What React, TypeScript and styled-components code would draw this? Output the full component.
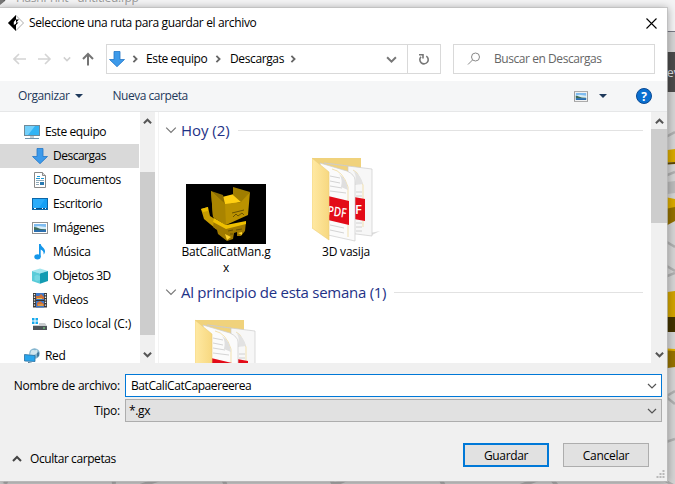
import React from "react";
import styled, { createGlobalStyle } from "styled-components";

const GlobalStyle = createGlobalStyle`
  * { box-sizing: border-box; }
  body { margin: 0; overflow: hidden; background: #d2d2d2; }
  svg { display: block; flex: none; }
`;

const Screen = styled.div`
  position: relative;
  width: 675px;
  height: 484px;
  overflow: hidden;
  padding-top: 8px;
  background: #d2d2d2;
  font-family: "Open Sans", "Noto Sans", sans-serif;
  font-size: 12px;
  color: #000;
`;

const Backdrop = styled.div`
  position: absolute;
  inset: 0;
`;

const BackTitle = styled.div`
  position: absolute;
  left: 16px;
  top: -10px;
  line-height: 16px;
  color: #9a9a9a;
  letter-spacing: -0.35px;
  white-space: nowrap;
`;

const BackTab = styled.div`
  position: absolute;
  left: 660px;
  top: 52px;
  width: 15px;
  height: 40px;
  padding-left: 2px;
  line-height: 42px;
  font-size: 12px;
  color: #d8dde4;
  background: #4b4b4b;
  white-space: nowrap;
  overflow: hidden;
`;

const Dialog = styled.div`
  position: relative;
  display: flex;
  flex-direction: column;
  width: 667px;
  height: 473px;
  background: #fff;
  box-shadow: 0 0 0 1px rgba(190, 190, 190, 0.75), 0 1px 8px 1px rgba(0, 0, 0, 0.32);
`;

const Text = styled.span<{ $ls?: number }>`
  white-space: nowrap;
  line-height: 16px;
  letter-spacing: ${(p) => p.$ls ?? -0.38}px;
`;

const TitleBar = styled.header`
  display: flex;
  align-items: center;
  height: 30px;
  padding: 0 10px 0 8px;
  gap: 5px;
`;

const Spacer = styled.div`
  flex: 1;
`;

const NavRow = styled.div`
  display: flex;
  align-items: center;
  height: 43px;
  padding: 0 12px 1px 13px;
`;

const Arrows = styled.div`
  display: flex;
  align-items: center;
  width: 93px;
`;

const AddressBar = styled.div`
  display: flex;
  align-items: center;
  width: 335px;
  height: 30px;
  border: 1px solid #d9d9d9;
  padding-left: 2px;
`;

const Crumb = styled.div<{ $w: number; $pad?: number }>`
  display: flex;
  flex: none;
  align-items: center;
  width: ${(p) => p.$w}px;
  padding-left: ${(p) => p.$pad ?? 7}px;
`;

const Refresh = styled.div`
  display: flex;
  align-items: center;
  justify-content: center;
  width: 33px;
  height: 28px;
  border-left: 1px solid #d9d9d9;
`;

const SearchBox = styled.div`
  display: flex;
  align-items: center;
  width: 202px;
  height: 30px;
  margin-left: 12px;
  padding-left: 13px;
  gap: 13px;
  border: 1px solid #d9d9d9;
  color: #666;
`;

const Toolbar = styled.div`
  display: flex;
  align-items: center;
  height: 31px;
  padding: 0 15px 0 18px;
  background: #f5f6f7;
  border-bottom: 1px solid #e6e7e8;
  color: #1e395b;
`;

const Body = styled.main`
  display: flex;
  height: 251px;
`;

const Sidebar = styled.nav`
  width: 140px;
  padding-top: 8px;
  overflow: hidden;
`;

const TreeRow = styled.div<{ $root?: boolean; $on?: boolean; $gap?: number }>`
  display: flex;
  align-items: center;
  width: 139px;
  height: 24px;
  margin-top: ${(p) => p.$gap ?? 0}px;
  padding-left: ${(p) => (p.$root ? 24 : 32)}px;
  gap: 5px;
  background: ${(p) => (p.$on ? "#d9d9d9" : "transparent")};
`;

const ScrollTrack = styled.div<{ $w: number }>`
  display: flex;
  flex-direction: column;
  align-items: center;
  width: ${(p) => p.$w}px;
  height: 251px;
  padding: 5px 0 4px;
  background: #f0f0f0;
`;

const Thumb = styled.div<{ $before: number; $h: number }>`
  width: 100%;
  height: ${(p) => p.$h}px;
  margin-top: ${(p) => p.$before}px;
  background: #cdcdcd;
`;

const Divider = styled.div`
  width: 4px;
  border-right: 1px solid #f3f3f3;
`;

const Files = styled.section`
  width: 492px;
  padding-top: 7px;
  overflow: hidden;
`;

const GroupHead = styled.div`
  display: flex;
  align-items: center;
  height: 22px;
  padding: 0 8px 0 6px;
  color: #1e3287;
  font-size: 15px;
`;

const GroupTitle = styled.span<{ $ls: number }>`
  margin-left: 4px;
  line-height: 20px;
  letter-spacing: ${(p) => p.$ls}px;
  white-space: nowrap;
`;

const Rule = styled.div`
  flex: 1;
  height: 1px;
  margin-left: 8px;
  margin-top: 1px;
  background: #e2e2e2;
`;

const FileGrid = styled.div<{ $h: number; $left: number }>`
  display: flex;
  height: ${(p) => p.$h}px;
  padding-left: ${(p) => p.$left}px;
`;

const FileTile = styled.div<{ $w: number; $top: number }>`
  display: flex;
  flex-direction: column;
  align-items: center;
  width: ${(p) => p.$w}px;
  padding-top: ${(p) => p.$top}px;
`;

const Caption = styled.div<{ $top: number }>`
  margin-top: ${(p) => p.$top}px;
  line-height: 16px;
  letter-spacing: -0.2px;
  text-align: center;
`;

const Footer = styled.footer`
  flex: 1;
  display: flex;
  flex-direction: column;
  padding: 11px 5px 0 0;
  background: #f0f0f0;
`;

const Field = styled.div`
  display: flex;
  align-items: center;
  height: 23px;
  margin-bottom: 2px;
`;

const FieldLabel = styled.div`
  width: 120px;
  margin-right: 5px;
  text-align: right;
`;

const Combo = styled.div<{ $active?: boolean }>`
  display: flex;
  align-items: center;
  justify-content: space-between;
  flex: 1;
  height: 23px;
  padding: 0 4px 0 ${(p) => (p.$active ? 5 : 3)}px;
  border: 1px solid ${(p) => (p.$active ? "#0078d7" : "#adadad")};
  background: ${(p) => (p.$active ? "#fff" : "#e1e1e1")};
`;

const Actions = styled.div`
  display: flex;
  align-items: center;
  height: 24px;
  margin-top: 19px;
  padding: 0 13px 0 12px;
`;

const FolderToggle = styled.div`
  display: flex;
  align-items: center;
  gap: 8px;
  margin-top: 7px;
`;

const Button = styled.button<{ $primary?: boolean }>`
  width: 86px;
  height: 24px;
  margin-left: 14px;
  padding: 0;
  border: ${(p) => (p.$primary ? "2px solid #0078d7" : "1px solid #adadad")};
  background: #e1e1e1;
  color: #000;
  font: inherit;
`;

const Grip = styled.div`
  position: absolute;
  right: 2px;
  bottom: 2px;
`;

const Chevron = ({ dir = "down", size = 10, color = "#555", width = 1.5 }: { dir?: "up" | "down" | "right"; size?: number; color?: string; width?: number }) => {
  const d = { up: "M1 7 5 3 9 7", down: "M1 3 5 7 9 3", right: "M3 1 7 5 3 9" }[dir];
  return (
    <svg width={size} height={size} viewBox="0 0 10 10" fill="none" stroke={color} strokeWidth={(width * 10) / size}>
      <path d={d} />
    </svg>
  );
};

const DownArrow = () => (
  <svg width="16" height="16" viewBox="0 0 16 16">
    <path d="M5 .5h6v8h4.5L8 15.7.5 8.500H5z" fill="#3d9aea" stroke="#2376c6" strokeWidth=".8" />
  </svg>
);

const Photo = ({ w = 16, h = 12 }: { w?: number; h?: number }) => (
  <svg width={w} height={h} viewBox="0 0 16 12">
    <rect x=".5" y=".5" width="15" height="11" fill="#fff" stroke="#929292" />
    <rect x="2" y="2" width="12" height="4" fill="#7fbcf0" />
    <path d="M2 5 6 4l8 1v2H2z" fill="#d7edf8" />
    <path d="M2 5c3 0 4 1.500 7 2l5 .3V8H2z" fill="#3e6b57" />
    <rect x="2" y="7.800" width="12" height="2.200" fill="#2b6fae" />
  </svg>
);

const icons: Record<string, React.ReactNode> = {
  pc: (
    <svg width="16" height="16" viewBox="0 0 16 16">
      <rect x=".5" y="1.500" width="15" height="10" fill="#32b4f5" stroke="#6f8a99" />
      <path d="M1 2h10L4 11H1z" fill="#72d0fb" />
      <path d="M6 12h4v2H6z" fill="#c4ccd1" />
      <path d="M1 14.500h14" stroke="#6f93ab" />
    </svg>
  ),
  down: <DownArrow />,
  doc: (
    <svg width="16" height="16" viewBox="0 0 16 16">
      <path d="M2.500.5h8l3 3v12h-11z" fill="#fff" stroke="#888" />
      <path d="M10.500.5v3h3" fill="#ddd" stroke="#888" />
      <path d="M5 4.500h3M4 6.500h4M9 6.500h3" stroke="#1f9ad6" />
      <path d="M4 8.500h8M4 10.500h3M4 12.500h3" stroke="#8fa9b8" />
      <path d="M8 10h4v3H8z" fill="#297ab2" />
    </svg>
  ),
  desk: (
    <svg width="16" height="12" viewBox="0 0 16 12">
      <rect x=".5" y=".5" width="15" height="11" fill="#16a0f5" stroke="#0b66a8" />
      <path d="M1 1h12L7 10H1z" fill="#2aacfa" />
      <path d="M1 10.500h14" stroke="#064f86" />
      <path d="M2 10.500h2M10 10.500h1M13 10.500h1" stroke="#fff" />
    </svg>
  ),
  img: <Photo />,
  music: (
    <svg width="16" height="16" viewBox="0 0 16 16">
      <ellipse cx="5.500" cy="12.800" rx="3.200" ry="2.600" fill="#1597ea" />
      <path d="M7 0h1.700c.5 3 4.500 4 4.300 7.500-.1 1.500-.8 2.500-1.500 3 .5-3-.8-4-2.800-5V13H7z" fill="#1597ea" />
    </svg>
  ),
  cube: (
    <svg width="16" height="16" viewBox="0 0 16 16">
      <path d="M0 3 8 .5 16 3 8 5.500z" fill="#a3e6ef" />
      <path d="M0 3l8 2.500v10.300L0 13z" fill="#5accd9" />
      <path d="M8 5.500 16 3v10l-8 2.800z" fill="#139bb2" />
      <path d="M2.500 8 5 6.700 8 8v4l-3 1-2.500-1z" fill="#8de2eb" opacity=".5" />
    </svg>
  ),
  video: (
    <svg width="16" height="16" viewBox="0 0 16 16">
      <rect x="1" y="1" width="14" height="14.500" fill="#3a3a3a" />
      <rect x="4" y="1" width="8" height="14.500" fill="#3d78c9" />
      <path d="M4 4h3l2-2 3 3v2H4zM5 11l3-2 4 3v2H5z" fill="#d0703a" />
      <path d="M5 6.500h5M6 13h5" stroke="#e6c34d" />
      <path d="M4 8.500h8" stroke="#333" />
      <path d="M2.500 2v13M13.500 2v13" stroke="#eee" strokeWidth="1.300" strokeDasharray="1.300 1.300" />
    </svg>
  ),
  disk: (
    <svg width="16" height="16" viewBox="0 0 16 16">
      <path d="M0 2h2.500v2.500H0zM3.500 2H6v2.500H3.500zM0 5.500h2.500V8H0zM3.500 5.500H6V8H3.500z" fill="#16a9ec" />
      <path d="M7 7h6l2 3H1V9h6z" fill="#c9cccf" />
      <rect x="1" y="10" width="14" height="4" fill="#4d5358" />
      <path d="M11 12h2" stroke="#7dea80" />
    </svg>
  ),
  net: (
    <svg width="16" height="16" viewBox="0 0 16 16">
      <circle cx="10.500" cy="5.500" r="5.300" fill="#84b5cf" />
      <path d="M7 3c2-2 3 0 5-1s2 3 0 4-4 2-6 1z" fill="#d1e5ed" />
      <path d="M13 5l2-1v4l-2 1z" fill="#45799c" />
      <path d="M.5 6.500 11 7.500v6L.5 13z" fill="#29a5ec" stroke="#2b6e9e" strokeWidth=".8" />
      <path d="M4 14.500l4 .8" stroke="#43718c" />
    </svg>
  ),
};

const AppIcon = () => (
  <svg width="16" height="16" viewBox="0 0 16 16">
    <path d="M8 .5 15.500 8 8 15.500.5 8z" fill="#fff" stroke="#888" strokeWidth=".7" />
    <path d="M8 0v4.500L5.800 7v3L8 8.800V16L0 8z" fill="#000" />
    <path d="M8 4.500h3L8 7.500zM8 7.500h2.500L8 10z" fill="#000" />
  </svg>
);

const NavArrow = ({ dir }: { dir: "left" | "right" | "up" }) => (
  <svg width="14" height="14" viewBox="0 0 14 14" fill="none" stroke={dir === "up" ? "#747474" : "#d4d4d4"} strokeWidth={dir === "up" ? 2 : 1.6}>
    <path d={{ left: "M13 7H1.500M6 2 1 7l5 5", right: "M0 7h11.500M7 2l5 5-5 5", up: "M7 13.500V2M2 7l5-5 5 5" }[dir]} />
  </svg>
);

const Caret = () => (
  <svg width="8" height="4" viewBox="0 0 8 4">
    <path d="M0 0h8L4 4z" fill="#1e395b" />
  </svg>
);

const PdfFolder = ({ id, labelled }: { id: string; labelled?: boolean }) => (
  <svg width="68" height="86" viewBox="2 0 68 86">
    <defs>
      <linearGradient id={id} x1="0" x2="1">
        <stop offset="0" stopColor="#ffe9a3" />
        <stop offset="1" stopColor="#f7d880" />
      </linearGradient>
    </defs>
    <path d="M60 76 70 74 62 78z" fill="#ddd" />
    <path d="M2 1h49v65L2 70z" fill="#f0d27c" />
    <path d="M14 6l48 6v67l-24-3V9z" fill="#f7f7f7" stroke="#ccc" strokeWidth=".7" />
    <path d="M46 35h6M46 39h6M46 66h6M46 70h6M46 74h6" stroke="#d0d0d0" />
    <path d="M43 13q5 2 6 7l4 8v42" fill="none" stroke="#eed58f" strokeWidth=".7" />
    <path d="M43 13q4 4 2 15l8-1q-2-9-10-14z" fill="#e2e2e2" />
    <path d="M44 40 55 42v22l-11-2z" fill="#e30b18" />
    <path d="M10 6l27 8q8 4 8 9v61L18 78z" fill="#fbfbfb" stroke="#ccc" strokeWidth=".7" />
    <path d="M20 19l10 2M20 24l10 2M20 29l12 2M20 34l16 2M20 68l14 3M20 73l14 3" stroke="#d4d4d4" />
    <path d="M22 12q11 2 16 18v50" fill="none" stroke="#eed58f" strokeWidth=".7" />
    <path d="M29 17q4 5 2 13l7 3q-1-11-9-16z" fill="#dfdfdf" />
    <path d="M18 39l21 5v24l-21-5z" fill="#e30b18" />
    {labelled && (
      <g fill="#fff" fontFamily="Open Sans, sans-serif" fontSize="13" fontWeight="600">
        <text x="17" y="58" transform="rotate(8 17 58)" textLength="19" lengthAdjust="spacingAndGlyphs">PDF</text>
        <text x="45" y="57">F</text>
      </g>
    )}
    <path d="M2 1 19 15v68L2 71z" fill={`url(#${id})`} stroke="#edcf78" strokeWidth=".6" />
  </svg>
);

const ModelThumb = () => (
  <svg width="80" height="60" viewBox="0 0 80 60">
    <rect width="80" height="60" fill="#000" />
    <path d="M36 13 48 10 56 18 39 21z" fill="#ffcf12" />
    <path d="M47 3 64 8 56 19 47 11z" fill="#a07d00" />
    <path d="M25 7 37 11 39 20 38 28z" fill="#8a6b00" />
    <path d="M25 7 39 20 55 18 64 8 62 31 40 41 27 33z" fill="#bb9200" />
    <path d="M25 7 39 20 40 41 27 33z" fill="#a98400" />
    <path d="M15 25 22 23 24 32 32 37 30 45 18 35z" fill="#c79c00" />
    <path d="M15 25 22 23 22 27 17 28z" fill="#e8bb00" />
    <path d="M28 35 40 43 60 38 59 47 55 52H51V48L48 49 47 55 41 57 32 50 31 46 27 43z" fill="#a07a00" />
    <path d="M28 34 40 41 60 37 60 40 40 45 27 38z" fill="#eebf00" />
    <path d="M46 29l12-3M47 33l3-3 2 2 4-3 2 2M42 47l5-1M50 46l6-1M44 50h3" stroke="#6b5300" fill="none" />
    <path d="M39 50l6 3-4 3zM52 49l4-1v3z" fill="#ffd42a" />
  </svg>
);

const Scene = () => (
  <svg width="675" height="484" viewBox="0 0 675 484">
    <rect width="675" height="31" fill="#f3f3f4" />
    <rect y="31" width="675" height="1" fill="#777783" />
    <rect y="32" width="675" height="452" fill="#d4d4d4" />
    <g stroke="#b0b0b0" strokeWidth="2.500" fill="none">
      <path d="M660 140l15-8M660 178l15-6M660 238l15 9M660 262l15 9M660 279l15-6M660 306l15 12M660 392l15 12M660 400l15-9M660 444l15-5M660 478l15 8" />
      <path d="M5 484l4-10M113 474l1 10M140 486l32-11M222 476l4 10M330 476l4 10M331 486l28-12M438 474l6 12M520 486l32-12M548 474l9 12" strokeWidth="4" />
    </g>
    <path d="M660 151l15-2v13l-15 1z" fill="#d8a900" />
    <path d="M660 163l15-1v2l-15 1z" fill="#5e4900" />
    <path d="M660 183l15-2v12l-15 2z" fill="#bbb" />
    <path d="M660 196l15 3v10l-15 3z" fill="#d8a900" />
    <path d="M660 210l15-3v14l-15 8z" fill="#927000" />
    <path d="M660 293l15-2v27h-15z" fill="#d0a300" />
    <path d="M660 317h15v15h-15z" fill="#423300" />
    <path d="M660 349h15v18l-15 2z" fill="#957200" />
    <path d="M660 348l15 1v2l-15-1z" fill="#e0b000" />
    <path d="M-8-2 0-10 7-1 0 4z" fill="#222" />
    <path d="M0-2 5 1 0 5z" fill="#777" />
  </svg>
);

export default function App() {
  return (
    <>
      <GlobalStyle />
      <Screen>
        <Backdrop>
          <Scene />
          <BackTitle>FlashPrint - untitled.fpp</BackTitle>
          <BackTab>rev</BackTab>
        </Backdrop>
        <Dialog>
          <TitleBar>
            <AppIcon />
            <Text $ls={-0.36}>Seleccione una ruta para guardar el archivo</Text>
            <Spacer />
            <svg width="11" height="11" viewBox="0 0 11 11" stroke="#000" strokeWidth="1.100"><path d="M.5.5l10 10M10.500.5l-10 10" /></svg>
          </TitleBar>
          <NavRow>
            <Arrows>
              <NavArrow dir="left" />
              <Spacer />
              <NavArrow dir="right" />
              <Spacer />
              <Chevron size={8} color="#d0d0d0" />
              <Spacer />
              <NavArrow dir="up" />
              <Spacer />
            </Arrows>
            <AddressBar>
              <DownArrow />
              <Crumb $w={21} $pad={6}><Chevron dir="right" size={8} color="#666" width={1.8} /></Crumb>
              <Crumb $w={76} $pad={0}>
                <Text>Este equipo</Text>
                <Spacer />
                <Chevron dir="right" size={8} color="#666" width={1.8} />
              </Crumb>
              <Crumb $w={75} $pad={8}>
                <Text>Descargas</Text>
                <Spacer />
                <Chevron dir="right" size={8} color="#666" width={1.8} />
              </Crumb>
              <Spacer />
              <Chevron size={11} color="#777" width={2} />
              <Crumb $w={10} />
              <Refresh>
                <svg width="12" height="12" viewBox="0 0 12 12" fill="none" stroke="#777" strokeWidth="1.600">
                  <path d="M8.300 3.100A4.200 4.200 0 1 1 3 3.700M1 1.800h4v3.700" />
                </svg>
              </Refresh>
            </AddressBar>
            <SearchBox>
              <svg width="14" height="14" viewBox="0 0 14 14" fill="none" stroke="#888"><circle cx="8.500" cy="5" r="4" /><path d="M5.500 8 1 12.500" /></svg>
              <Text $ls={-0.44}>Buscar en Descargas</Text>
            </SearchBox>
          </NavRow>
          <Toolbar>
            <Text $ls={-0.4}>Organizar</Text>
            <Crumb $w={43} $pad={6}><Caret /></Crumb>
            <Text $ls={-0.46}>Nueva carpeta</Text>
            <Spacer />
            <Photo w={14} h={11} />
            <Crumb $w={48}><Spacer /><Caret /><Crumb $w={29} /></Crumb>
            <svg width="16" height="16" viewBox="0 0 16 16"><circle cx="8" cy="8" r="7.500" fill="#0a6fd0" stroke="#0a4a94" /><text x="8" y="12.500" textAnchor="middle" fill="#fff" fontFamily="Open Sans, sans-serif" fontWeight="700" fontSize="12">?</text></svg>
          </Toolbar>
          <Body>
            <Sidebar>
              <TreeRow $root>{icons.pc}<Text $ls={-0.4}>Este equipo</Text></TreeRow>
              <TreeRow $on>{icons.down}<Text $ls={-0.5}>Descargas</Text></TreeRow>
              <TreeRow>{icons.doc}<Text $ls={-0.35}>Documentos</Text></TreeRow>
              <TreeRow>{icons.desk}<Text $ls={-0.35}>Escritorio</Text></TreeRow>
              <TreeRow>{icons.img}<Text $ls={-0.4}>Imágenes</Text></TreeRow>
              <TreeRow>{icons.music}<Text $ls={-0.3}>Música</Text></TreeRow>
              <TreeRow>{icons.cube}<Text $ls={-0.45}>Objetos 3D</Text></TreeRow>
              <TreeRow>{icons.video}<Text $ls={-0.35}>Videos</Text></TreeRow>
              <TreeRow>{icons.disk}<Text $ls={-0.12}>Disco local (C:)</Text></TreeRow>
              <TreeRow $root $gap={8}>{icons.net}<Text $ls={-0.3}>Red</Text></TreeRow>
            </Sidebar>
            <ScrollTrack $w={15}>
              <Chevron dir="up" size={9} width={2} />
              <Thumb $before={46} $h={163} />
              <Spacer />
              <Chevron size={9} width={2} />
            </ScrollTrack>
            <Divider />
            <Files>
              <GroupHead>
                <Chevron size={12} color="#777" width={1.2} />
                <GroupTitle $ls={-0.05}>Hoy (2)</GroupTitle>
                <Rule />
              </GroupHead>
              <FileGrid $h={140} $left={19}>
                <FileTile $w={96} $top={43}><ModelThumb /><Caption $top={0}>BatCaliCatMan.g<br />x</Caption></FileTile>
                <FileTile $w={144} $top={16}><PdfFolder id="folder-a" labelled /><Caption $top={1}>3D vasija</Caption></FileTile>
              </FileGrid>
              <GroupHead>
                <Chevron size={12} color="#777" width={1.2} />
                <GroupTitle $ls={-0.27}>Al principio de esta semana (1)</GroupTitle>
                <Rule />
              </GroupHead>
              <FileGrid $h={60} $left={34}>
                <FileTile $w={72} $top={16}><PdfFolder id="folder-b" /></FileTile>
              </FileGrid>
            </Files>
            <ScrollTrack $w={16}>
              <Chevron dir="up" size={9} width={2} />
              <Thumb $before={3} $h={94} />
              <Spacer />
              <Chevron size={9} width={2} />
            </ScrollTrack>
          </Body>
          <Footer>
            <Field>
              <FieldLabel><Text $ls={-0.25}>Nombre de archivo:</Text></FieldLabel>
              <Combo $active><Text $ls={-0.42}>BatCaliCatCapaereerea</Text><Chevron size={10} width={1.2} /></Combo>
            </Field>
            <Field>
              <FieldLabel><Text $ls={-0.25}>Tipo:</Text></FieldLabel>
              <Combo><Text>*.gx</Text><Chevron size={10} width={1.2} /></Combo>
            </Field>
            <Actions>
              <FolderToggle>
                <Chevron dir="up" size={10} color="#444" width={2} />
                <Text $ls={-0.42}>Ocultar carpetas</Text>
              </FolderToggle>
              <Spacer />
              <Button $primary><Text $ls={-0.35}>Guardar</Text></Button>
              <Button><Text $ls={-0.3}>Cancelar</Text></Button>
            </Actions>
          </Footer>
          <Grip>
            <svg width="9" height="9" viewBox="0 0 9 9" fill="#b8b8b8"><path d="M6.500 0h2v2h-2zM3.500 3h2v2h-2zM6.500 3h2v2h-2zM.5 6h2v2h-2zM3.500 6h2v2h-2zM6.500 6h2v2h-2z" /></svg>
          </Grip>
        </Dialog>
      </Screen>
    </>
  );
}
